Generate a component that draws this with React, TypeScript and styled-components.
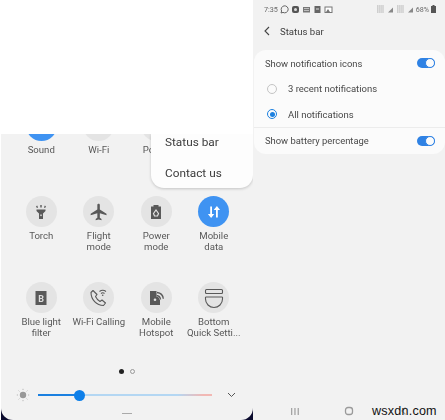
import React from 'react';
import styled, { createGlobalStyle } from 'styled-components';
import { MdFlight } from 'react-icons/md';

const GlobalStyle = createGlobalStyle`
	html, body {
		margin: 0;
		padding: 0;
		background: #fff;
		font-family: Roboto, "Liberation Sans", sans-serif;
	}
`;

const Page = styled.div`
	position: relative;
	display: flex;
	width: 445px;
	height: 420px;
	overflow: hidden;
	padding-left: 1px;
	box-sizing: border-box;
`;

const LeftColumn = styled.div`
	display: flex;
	flex-direction: column;
	width: 252px;
	flex: none;
	filter: blur(0.3px);
`;

const BlankTop = styled.div`
	height: 134px;
	background: #fff;
	flex: none;
`;

const PanelBack = styled.div`
	flex: 1;
	background: #0b0b2e;
	min-height: 0;
`;

const Panel = styled.div`
	position: relative;
	height: 100%;
	background: #f2f2f2;
	border-radius: 0 0 12px 12px;
	overflow: hidden;
	display: flex;
	flex-direction: column;
`;

const Grid = styled.div`
	display: grid;
	grid-template-columns: repeat(4, 57.5px);
	grid-auto-rows: 86px;
	margin-top: -24px;
	padding-left: 11.5px;
`;

const Tile = styled.div`
	display: flex;
	flex-direction: column;
	align-items: center;
	min-width: 0;
`;

const Round = styled.div<{ $on?: boolean }>`
	width: 31px;
	height: 31px;
	border-radius: 50%;
	flex: none;
	display: flex;
	align-items: center;
	justify-content: center;
	color: ${p => (p.$on ? '#fff' : '#595959')};
	background: ${p => (p.$on ? '#3f93f2' : '#e4e4e4')};
`;

const Label = styled.div`
	margin-top: 2.5px;
	width: 66px;
	text-align: center;
	font-size: 9.6px;
	line-height: 11px;
	color: #585858;
`;

const Menu = styled.div`
	position: absolute;
	left: 150px;
	top: 0;
	width: 102px;
	height: 54px;
	background: #fdfdfd;
	border-radius: 0 0 13px 13px;
	box-shadow: 0 1px 3px #00000030;
	display: flex;
	flex-direction: column;
`;

const MenuItem = styled.div`
	height: 31px;
	flex: none;
	padding-left: 14px;
	margin-top: -7px;
	font-size: 11.8px;
	line-height: 31px;
	color: #3c3c3c;
	& + & {
		margin-top: 0;
	}
`;

const Dots = styled.div`
	display: flex;
	justify-content: center;
	align-items: center;
	gap: 5.5px;
	height: 6px;
	flex: none;
`;

const Dot = styled.span<{ $active?: boolean }>`
	width: 5px;
	height: 5px;
	box-sizing: border-box;
	border-radius: 50%;
	background: ${p => (p.$active ? '#222' : 'transparent')};
	border: ${p => (p.$active ? 'none' : '1px solid #999')};
`;

const SliderRow = styled.div`
	display: flex;
	align-items: center;
	height: 14px;
	margin-top: 14px;
	padding-left: 15px;
	flex: none;
`;

const Track = styled.div`
	position: relative;
	width: 174px;
	height: 2px;
	margin-left: 8px;
	background: linear-gradient(90deg, #b4d7f3 0%, #b4d7f3 80%, #f2b8b4 95%, #f2b8b4 100%);
`;

const TrackFill = styled.div`
	height: 100%;
	background: #1b80e0;
`;

const Thumb = styled.div`
	position: absolute;
	top: -4.5px;
	width: 11px;
	height: 11px;
	margin-left: -5.5px;
	border-radius: 50%;
	background: #0d7fe9;
`;

const Chevron = styled.div`
	margin-left: 15px;
	display: flex;
`;

const Handle = styled.div`
	width: 10px;
	height: 1px;
	background: #aaa;
	margin: 11px auto 0;
	flex: none;
`;

const RightColumn = styled.div`
	flex: 1;
	min-width: 0;
	display: flex;
	flex-direction: column;
	background: #f2f2f2;
	filter: blur(0.3px);
`;

const StatusBar = styled.div`
	height: 19px;
	flex: none;
	display: flex;
	align-items: center;
	justify-content: space-between;
	padding: 0 9px 1px 11px;
	box-sizing: border-box;
	font-size: 7.2px;
	color: #6a6a6a;
`;

const StatusGroup = styled.div`
	display: flex;
	align-items: center;
	gap: 2px;
`;

const Header = styled.div`
	height: 24px;
	flex: none;
	display: flex;
	align-items: center;
	padding-left: 11px;
	font-size: 9.6px;
	color: #404040;
`;

const HeaderTitle = styled.span`
	margin-left: 10px;
`;

const Card = styled.div`
	margin: 7px 0 0 1px;
	background: #fbfbfb;
	border-radius: 12px;
	display: flex;
	flex-direction: column;
	padding-bottom: 1px;
`;

const Row = styled.div<{ $divided?: boolean }>`
	height: 26px;
	box-sizing: border-box;
	display: flex;
	align-items: center;
	justify-content: space-between;
	padding: 0 10px 0 11px;
	font-size: 9.4px;
	color: #484848;
	border-top: ${p => (p.$divided ? '1px solid #ececec' : 'none')};
`;

const RadioRow = styled.div`
	height: 25.5px;
	display: flex;
	align-items: center;
	padding-left: 13px;
	font-size: 9.5px;
	color: #484848;
`;

const Radio = styled.span<{ $checked?: boolean }>`
	width: 10px;
	height: 10px;
	box-sizing: border-box;
	border-radius: 50%;
	margin-right: 11px;
	flex: none;
	display: flex;
	align-items: center;
	justify-content: center;
	border: 1px solid ${p => (p.$checked ? '#1b80e0' : '#c4c4c4')};
	&::after {
		content: '';
		width: 5px;
		height: 5px;
		border-radius: 50%;
		background: ${p => (p.$checked ? '#1b80e0' : 'transparent')};
	}
`;

const Toggle = styled.span`
	width: 18px;
	height: 10px;
	box-sizing: border-box;
	border-radius: 5px;
	background: #2f82e4;
	display: flex;
	justify-content: flex-end;
	align-items: center;
	&::after {
		content: '';
		width: 10px;
		height: 10px;
		box-sizing: border-box;
		border-radius: 50%;
		background: #fbfbfb;
		border: 1px solid #2f82e4;
	}
`;

const NavBar = styled.div`
	margin-top: auto;
	height: 18px;
	box-sizing: border-box;
	display: flex;
	align-items: center;
	justify-content: space-around;
	flex: none;
	padding-left: 15px;
	padding-right: 14px;
`;

const Watermark = styled.div`
	position: absolute;
	left: 372px;
	top: 403px;
	font-size: 12.6px;
	line-height: 16px;
	color: #111;
	font-family: "Liberation Sans", Arial, sans-serif;
	letter-spacing: 0.2px;
`;

const TorchIcon = () => (
	<svg width="16" height="16" viewBox="0 0 16 16" fill="currentColor">
		<path d="M3.5 5.5h9v1.5L10 9.5V15H6V9.5L3.500 7z" />
		<rect x="7.300" y="10.500" width="1.400" height="1.600" fill="#e4e4e4" />
		<rect x="7.300" y="1" width="1.400" height="2.500" />
		<rect x="3.400" y="1.800" width="1.300" height="2" transform="rotate(-25 4 2.800)" />
		<rect x="11.300" y="1.800" width="1.300" height="2" transform="rotate(25 12 2.800)" />
	</svg>
);

const PowerIcon = () => (
	<svg width="16" height="16" viewBox="0 0 16 16">
		<path d="M5.500 1h5v1.500H13V15H3V2.500h2.500z" fill="currentColor" />
		<path d="M5.500 9.500 8 6l2.500 3.500L9.500 12h-3z" fill="none" stroke="#e4e4e4" strokeWidth="1.200" />
	</svg>
);

const DataIcon = () => (
	<svg width="16" height="16" viewBox="0 0 16 16" fill="#fff">
		<path d="M4.200 2.500h1.800v7.500h2.300L5.100 14 1.900 10h2.300z" />
		<path d="M10 13.500h1.800V6h2.300l-3.200-4-3.200 4H10z" />
	</svg>
);

const BlueLightIcon = () => (
	<svg width="14" height="16" viewBox="0 0 14 16">
		<rect x="1.500" y="1" width="11" height="14" fill="#595959" />
		<text x="7" y="11.500" fontSize="9" fontWeight="700" textAnchor="middle" fill="#ddd" fontFamily="Roboto, sans-serif">B</text>
	</svg>
);

const WifiCallIcon = () => (
	<svg width="20" height="20" viewBox="0 0 20 20" fill="none" stroke="currentColor">
		<path d="M4 2.500 2 4.500c0 7 5.500 13 12.500 13l2-2.500-3.500-3-2 1.500C9 12.500 7.500 10.500 6.500 8.500L8 6.500z" strokeWidth="1.100" strokeLinejoin="round" />
		<path d="M10.500 3.500c2-1.600 4.500-1.600 6.500 0M12 5.500c1.100-.9 2.400-.9 3.500 0" strokeWidth="1.100" />
		<circle cx="13.700" cy="7.300" r=".8" fill="currentColor" stroke="none" />
	</svg>
);

const HotspotIcon = () => (
	<svg width="18" height="18" viewBox="0 0 18 18">
		<path d="M3 2h7l3 3v11H3z" fill="#595959" />
		<path d="M8 9.500a1.300 1.300 0 1 1 0 2.600 1.300 1.300 0 0 1 0-2.600z" fill="#e4e4e4" />
		<path d="M9.500 6c2.500.3 4.200 2 4.500 4.500M9.500 3.200c4 .3 7 3.300 7.300 7.300" fill="none" stroke="#e4e4e4" strokeWidth="2.800" />
		<path d="M9.500 6.500c2.200.2 3.800 1.800 4 4M10 3.500c3.500.3 6 2.800 6.300 6.300" fill="none" stroke="#595959" strokeWidth="1.300" />
	</svg>
);

const BottomIcon = () => (
	<svg width="24" height="24" viewBox="0 0 24 24" fill="none" stroke="#595959" strokeWidth="1.100">
		<rect x="3.500" y="3.500" width="17" height="4" rx="1" />
		<path d="M3.500 11h17M3.500 11v2a8.500 8.500 0 0 0 17 0v-2" />
	</svg>
);

const SunIcon = () => (
	<svg width="14" height="14" viewBox="0 0 14 14" stroke="#aaa" strokeWidth="0.800">
		<circle cx="7" cy="7" r="3.200" fill="#999" stroke="none" />
		<path d="M7 .8v1.200M7 12v1.200M.8 7H2M12 7h1.200M2.600 2.600l.8.8M10.600 10.600l.8.8M2.600 11.400l.8-.8M10.600 3.400l.8-.8" />
	</svg>
);

const StatusIcons = () => (
	<StatusGroup>
		<svg width="9" height="9" viewBox="0 0 9 9" fill="none" stroke="#666">
			<path d="M1 8l.6-2A3.500 3.500 0 1 1 3 7.400z" />
		</svg>
		<svg width="9" height="9" viewBox="0 0 9 9">
			<rect x="1" y="1" width="7" height="7" rx="2" fill="#555" />
			<circle cx="4.500" cy="4.500" r="1.500" fill="#ddd" />
		</svg>
		<svg width="9" height="9" viewBox="0 0 9 9">
			<rect x="1" y="2" width="7" height="5.500" fill="#777" />
			<path d="M2 3.500h5M2 5.500h5" stroke="#ddd" strokeWidth=".7" />
		</svg>
		<svg width="9" height="9" viewBox="0 0 9 9">
			<rect x="1.500" y="1" width="6" height="7" fill="#666" />
			<path d="M3 4h3" stroke="#ddd" />
		</svg>
		<svg width="9" height="9" viewBox="0 0 9 9">
			<rect x="1" y="2" width="7" height="5.500" fill="#fff" stroke="#777" />
			<path d="M2 7l2-3 2 3z" fill="#777" />
		</svg>
	</StatusGroup>
);

const SignalIcon = () => (
	<svg width="18" height="8" viewBox="0 0 18 8">
		<path d="M1 1h7M1 3h7M1 5h7M1 7h7" stroke="#999" strokeWidth=".8" strokeDasharray="1.500 .6" />
		<path d="M12 7.500l5-5v5z" fill="#888" />
	</svg>
);

const tiles: { label?: React.ReactNode; icon?: React.ReactNode; on?: boolean }[] = [
	{ label: 'Sound', on: true },
	{ label: 'Wi-Fi' },
	{ label: 'Power' },
	{},
	{ label: 'Torch', icon: <TorchIcon /> },
	{ label: <>Flight<br />mode</>, icon: <MdFlight size={20} /> },
	{ label: <>Power<br />mode</>, icon: <PowerIcon /> },
	{ label: <>Mobile<br />data</>, icon: <DataIcon />, on: true },
	{ label: <>Blue light<br />filter</>, icon: <BlueLightIcon /> },
	{ label: 'Wi-Fi Calling', icon: <WifiCallIcon /> },
	{ label: <>Mobile<br />Hotspot</>, icon: <HotspotIcon /> },
	{ label: <>Bottom<br />Quick Setti...</>, icon: <BottomIcon /> },
];

const App: React.FC = () => (
	<Page>
		<GlobalStyle />
		<LeftColumn>
			<BlankTop />
			<PanelBack>
				<Panel>
					<Grid>
						{tiles.map((t, i) => (
							<Tile key={i}>
								<Round $on={t.on}>{t.icon}</Round>
								<Label>{t.label}</Label>
							</Tile>
						))}
					</Grid>
					<Dots>
						<Dot $active />
						<Dot />
					</Dots>
					<SliderRow>
						<SunIcon />
						<Track>
							<TrackFill style={{ width: '24%' }} />
							<Thumb style={{ left: '24%' }} />
						</Track>
						<Chevron>
							<svg width="9" height="6" viewBox="0 0 9 6" fill="none" stroke="#555" strokeWidth="1">
								<path d="M1 1l3.500 3.500L8 1" />
							</svg>
						</Chevron>
					</SliderRow>
					<Handle />
					<Menu>
						<MenuItem>Status bar</MenuItem>
						<MenuItem>Contact us</MenuItem>
					</Menu>
				</Panel>
			</PanelBack>
		</LeftColumn>
		<RightColumn>
			<StatusBar>
				<StatusGroup>
					7:35
					<StatusIcons />
				</StatusGroup>
				<StatusGroup>
					<SignalIcon />
					<SignalIcon />
					68%
					<svg width="5" height="8" viewBox="0 0 5 8">
						<path d="M1.500 0h2v1H5v7H0V1h1.500z" fill="#555" />
					</svg>
				</StatusGroup>
			</StatusBar>
			<Header>
				<svg width="6" height="10" viewBox="0 0 6 10" fill="none" stroke="#444" strokeWidth="1.100">
					<path d="M5 1 1 5l4 4" />
				</svg>
				<HeaderTitle>Status bar</HeaderTitle>
			</Header>
			<Card>
				<Row>
					Show notification icons
					<Toggle />
				</Row>
				<RadioRow>
					<Radio />
					3 recent notifications
				</RadioRow>
				<RadioRow>
					<Radio $checked />
					All notifications
				</RadioRow>
				<Row $divided>
					Show battery percentage
					<Toggle />
				</Row>
			</Card>
			<NavBar>
				<svg width="10" height="9" viewBox="0 0 10 9" fill="#a5a5a5">
					<rect x="1" y="1" width="1.300" height="7" />
					<rect x="4.300" y="1" width="1.300" height="7" />
					<rect x="7.600" y="1" width="1.300" height="7" />
				</svg>
				<svg width="10" height="10" viewBox="0 0 10 10" fill="none" stroke="#9a9a9a" strokeWidth="1.300">
					<rect x="1.500" y="1.500" width="7" height="7" rx="2.500" />
				</svg>
				<svg width="10" height="10" viewBox="0 0 10 10" fill="none" stroke="#a5a5a5" strokeWidth="1.200">
					<path d="M6.500 1.500 3 5l3.500 3.500" />
				</svg>
			</NavBar>
		</RightColumn>
		<Watermark>wsxdn.com</Watermark>
	</Page>
);

export default App;
